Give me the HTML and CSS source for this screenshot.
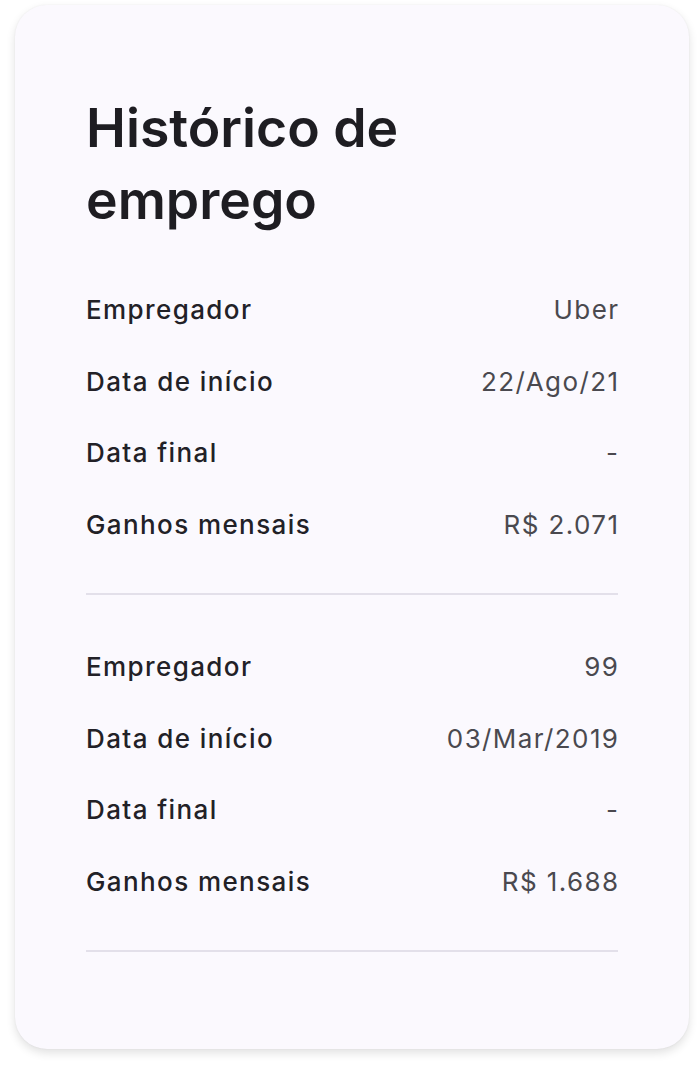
FILE: index.html
```html
<!DOCTYPE html>
<html lang="pt-BR">
<head>
    <meta charset="UTF-8">
    <meta name="viewport" content="width=device-width, initial-scale=1.0">
    <title>Histórico de emprego</title>
    <link rel="stylesheet" href="styles.css">
</head>
<body>

    <div class="card">
        <h1>Histórico de emprego</h1>

        <div class="grupo">
            <div class="linha"><span class="rotulo">Empregador</span><span class="valor">Uber</span></div>
            <div class="linha"><span class="rotulo">Data de início</span><span class="valor">22/Ago/21</span></div>
            <div class="linha"><span class="rotulo">Data final</span><span class="valor">-</span></div>
            <div class="linha"><span class="rotulo">Ganhos mensais</span><span class="valor">R$ 2.071</span></div>
        </div>

        <div class="grupo">
            <div class="linha"><span class="rotulo">Empregador</span><span class="valor">99</span></div>
            <div class="linha"><span class="rotulo">Data de início</span><span class="valor">03/Mar/2019</span></div>
            <div class="linha"><span class="rotulo">Data final</span><span class="valor">-</span></div>
            <div class="linha"><span class="rotulo">Ganhos mensais</span><span class="valor">R$ 1.688</span></div>
        </div>
    </div>

</body>
</html>
```

FILE: styles.css
```css
body {
    margin: 0;
    padding: 5px 10px 19px 15px;
    font-family: Inter, "Noto Sans", sans-serif;
    background-color: #ffffff;
}
.card {
    width: 674px;
    box-sizing: border-box;
    padding: 87px 71px 61px 71px;
    background-color: #fbf9fe;
    border-radius: 32px;
    box-shadow: 0 4px 10px rgba(0, 0, 0, 0.12), 0 0 2px rgba(0, 0, 0, 0.06);
}
h1 {
    margin: 0 0 38px 0;
    font-size: 53.5px;
    font-weight: 600;
    line-height: 72px;
    color: #1e1d22;
    width: 400px;
}
.grupo {
    padding: 0 0 33px 0;
    border-bottom: 2px solid #e3e0ea;
    margin-bottom: 36px;
}
.linha {
    display: flex;
    justify-content: space-between;
    align-items: center;
    height: 71.5px;
    font-size: 26px;
    letter-spacing: 1.4px;
}
.rotulo {
    font-weight: 500;
    color: #222127;
}
.valor {
    font-weight: 400;
    color: #4a494f;
    margin-right: -1.4px;
}
```
